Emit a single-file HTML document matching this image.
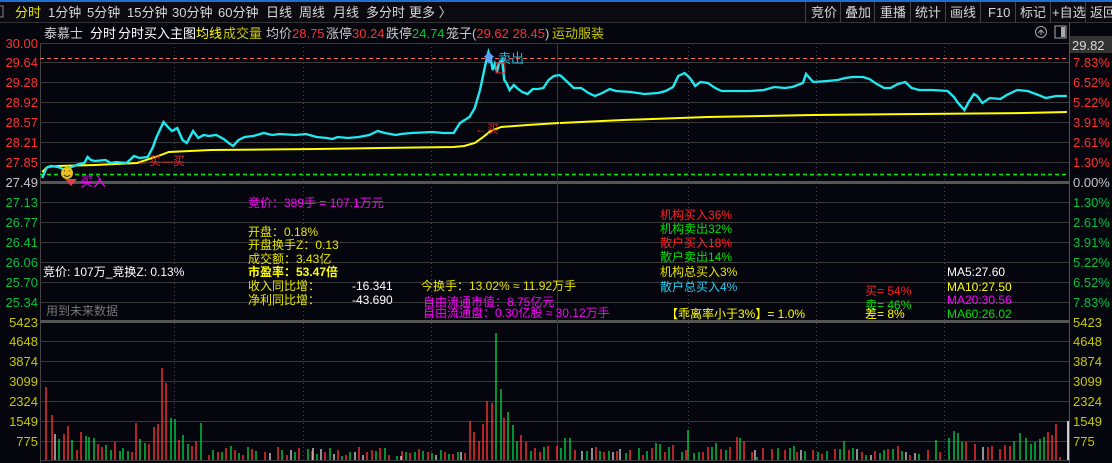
<!DOCTYPE html>
<html><head><meta charset="utf-8">
<style>
html,body{margin:0;padding:0;background:#05050d;width:1112px;height:463px;overflow:hidden}
svg{display:block}
text{font-family:"Liberation Sans","Noto Sans CJK SC",sans-serif;font-size:12px}
</style></head><body>
<svg width="1112" height="463" xmlns="http://www.w3.org/2000/svg">
<rect width="1112" height="463" fill="#05050d"/>
<rect x="0" y="0" width="1112" height="2" fill="#1f6fd1"/>
<rect x="0" y="2" width="1112" height="20" fill="#0a0a10"/>
<line x1="0" y1="22.5" x2="1112" y2="22.5" stroke="#333"/>
<rect x="-3" y="6" width="6" height="11" fill="none" stroke="#888"/>
<g fill="#d8d8d8">
<text x="15" y="17" fill="#e8e800" style="font-size:13px">分时</text>
<text x="48" y="17" style="font-size:13px">1分钟</text>
<text x="87" y="17" style="font-size:13px">5分钟</text>
<text x="127" y="17" style="font-size:13px">15分钟</text>
<text x="172" y="17" style="font-size:13px">30分钟</text>
<text x="218" y="17" style="font-size:13px">60分钟</text>
<text x="266" y="17" style="font-size:13px">日线</text>
<text x="299" y="17" style="font-size:13px">周线</text>
<text x="333" y="17" style="font-size:13px">月线</text>
<text x="366" y="17" style="font-size:13px">多分时</text>
<text x="409" y="17" style="font-size:13px">更多 〉</text>
</g>
<g stroke="#444">
<line x1="805.5" y1="2" x2="805.5" y2="22"/><line x1="840.5" y1="2" x2="840.5" y2="22"/>
<line x1="874.5" y1="2" x2="874.5" y2="22"/><line x1="910.5" y1="2" x2="910.5" y2="22"/>
<line x1="945.5" y1="2" x2="945.5" y2="22"/><line x1="980.5" y1="2" x2="980.5" y2="22"/>
<line x1="1015.5" y1="2" x2="1015.5" y2="22"/><line x1="1050.5" y1="2" x2="1050.5" y2="22"/>
<line x1="1085.5" y1="2" x2="1085.5" y2="22"/>
</g>
<g fill="#d8d8d8">
<text x="811" y="17" style="font-size:13px">竞价</text>
<text x="845" y="17" style="font-size:13px">叠加</text>
<text x="880" y="17" style="font-size:13px">重播</text>
<text x="915" y="17" style="font-size:13px">统计</text>
<text x="950" y="17" style="font-size:13px">画线</text>
<text x="988" y="17" style="font-size:13px">F10</text>
<text x="1020" y="17" style="font-size:13px">标记</text>
<text x="1052" y="17" style="font-size:13px">+自选</text>
<text x="1090" y="17" style="font-size:13px">返回</text>
</g>
<g>
<text x="44" y="38" fill="#d0d0d0" style="font-size:13px">泰慕士</text>
<text x="90" y="38" fill="#fff" style="font-size:13px">分时</text>
<text x="118" y="38" fill="#fff" style="font-size:13px">分时买入主图</text>
<text x="196" y="38" fill="#ffff00" style="font-size:13px">均线</text>
<text x="223" y="38" fill="#c8c800" style="font-size:13px">成交量</text>
<text x="266" y="38" fill="#c8c8c8" style="font-size:13px">均价</text>
<text x="292" y="38" fill="#ff3030" style="font-size:13px">28.75</text>
<text x="326" y="38" fill="#c8c8c8" style="font-size:13px">涨停</text>
<text x="352" y="38" fill="#ff3030" style="font-size:13px">30.24</text>
<text x="386" y="38" fill="#c8c8c8" style="font-size:13px">跌停</text>
<text x="412" y="38" fill="#00d030" style="font-size:13px">24.74</text>
<text x="446" y="38" fill="#c8c8c8" style="font-size:13px">笼子(<tspan fill="#ff3030">29.62 28.45</tspan>)</text>
<text x="552" y="38" fill="#c8c800" style="font-size:13px">运动服装</text>
</g>
<circle cx="1041" cy="32" r="5.5" fill="none" stroke="#aaa"/><path d="M1038 33 L1041 30 L1044 33 M1041 30 V35" stroke="#aaa" fill="none"/>
<rect x="1055" y="26" width="11" height="12" fill="none" stroke="#aaa"/><rect x="1061" y="27" width="4" height="10" fill="#aaa"/>
<line x1="40.5" y1="43" x2="40.5" y2="463" stroke="#444"/>
<line x1="1069.5" y1="22" x2="1069.5" y2="463" stroke="#555"/>
<path stroke="#3a3a3a" d="M40 43.5H1069M40 62.5H1069M40 82.5H1069M40 102.5H1069M40 122.5H1069M40 142.5H1069M40 162.5H1069M40 202.5H1069M40 222.5H1069M40 242.5H1069M40 262.5H1069M40 282.5H1069M40 302.5H1069M40 341.5H1069M40 361.5H1069M40 381.5H1069M40 401.5H1069M40 421.5H1069M40 441.5H1069M40 460.5H1069"/>
<rect x="40" y="181" width="1029" height="3" fill="#555"/>
<rect x="40" y="320" width="1029" height="3" fill="#555"/>
<g stroke="#444" stroke-dasharray="1,3">
<line x1="174.5" y1="43" x2="174.5" y2="460"/><line x1="303.5" y1="43" x2="303.5" y2="460"/>
<line x1="431.5" y1="43" x2="431.5" y2="460"/><line x1="688.5" y1="43" x2="688.5" y2="460"/>
<line x1="816.5" y1="43" x2="816.5" y2="460"/><line x1="944.5" y1="43" x2="944.5" y2="460"/>
</g>
<line x1="557.5" y1="43" x2="557.5" y2="460" stroke="#3a3a3a"/>
<line x1="40" y1="58.5" x2="1069" y2="58.5" stroke="#ff6060" stroke-dasharray="4,3"/>
<line x1="40" y1="174.5" x2="1069" y2="174.5" stroke="#00ee00" stroke-width="1.5" stroke-dasharray="4,3"/>
<g text-anchor="end" style="font-size:13px">
<text x="38" y="48" fill="#ff3030" style="font-size:13px">30.00</text>
<text x="38" y="67" fill="#ff3030" style="font-size:13px">29.64</text>
<text x="38" y="87" fill="#ff3030" style="font-size:13px">29.28</text>
<text x="38" y="107" fill="#ff3030" style="font-size:13px">28.92</text>
<text x="38" y="127" fill="#ff3030" style="font-size:13px">28.57</text>
<text x="38" y="147" fill="#ff3030" style="font-size:13px">28.21</text>
<text x="38" y="167" fill="#ff3030" style="font-size:13px">27.85</text>
<text x="38" y="187" fill="#c8c8c8" style="font-size:13px">27.49</text>
<text x="38" y="207" fill="#00c040" style="font-size:13px">27.13</text>
<text x="38" y="227" fill="#00c040" style="font-size:13px">26.77</text>
<text x="38" y="247" fill="#00c040" style="font-size:13px">26.41</text>
<text x="38" y="267" fill="#00c040" style="font-size:13px">26.06</text>
<text x="38" y="287" fill="#00c040" style="font-size:13px">25.70</text>
<text x="38" y="307" fill="#00c040" style="font-size:13px">25.34</text>
<text x="38" y="327" fill="#c8c800" style="font-size:13px">5423</text>
<text x="38" y="346" fill="#c8c800" style="font-size:13px">4648</text>
<text x="38" y="366" fill="#c8c800" style="font-size:13px">3874</text>
<text x="38" y="386" fill="#c8c800" style="font-size:13px">3099</text>
<text x="38" y="406" fill="#c8c800" style="font-size:13px">2324</text>
<text x="38" y="426" fill="#c8c800" style="font-size:13px">1549</text>
<text x="38" y="446" fill="#c8c800" style="font-size:13px">775</text>
</g>
<rect x="1070" y="36" width="42" height="17" fill="#333"/>
<text x="1072" y="50" fill="#d8d8d8" style="font-size:13px">29.82</text>
<g>
<text x="1073" y="67" fill="#ff3030" style="font-size:13px">7.83%</text>
<text x="1073" y="87" fill="#ff3030" style="font-size:13px">6.52%</text>
<text x="1073" y="107" fill="#ff3030" style="font-size:13px">5.22%</text>
<text x="1073" y="127" fill="#ff3030" style="font-size:13px">3.91%</text>
<text x="1073" y="147" fill="#ff3030" style="font-size:13px">2.61%</text>
<text x="1073" y="167" fill="#ff3030" style="font-size:13px">1.30%</text>
<text x="1073" y="187" fill="#c8c8c8" style="font-size:13px">0.00%</text>
<text x="1073" y="207" fill="#00c040" style="font-size:13px">1.30%</text>
<text x="1073" y="227" fill="#00c040" style="font-size:13px">2.61%</text>
<text x="1073" y="247" fill="#00c040" style="font-size:13px">3.91%</text>
<text x="1073" y="267" fill="#00c040" style="font-size:13px">5.22%</text>
<text x="1073" y="287" fill="#00c040" style="font-size:13px">6.52%</text>
<text x="1073" y="307" fill="#00c040" style="font-size:13px">7.83%</text>
<text x="1073" y="327" fill="#c8c800" style="font-size:13px">5423</text>
<text x="1073" y="346" fill="#c8c800" style="font-size:13px">4648</text>
<text x="1073" y="366" fill="#c8c800" style="font-size:13px">3874</text>
<text x="1073" y="386" fill="#c8c800" style="font-size:13px">3099</text>
<text x="1073" y="406" fill="#c8c800" style="font-size:13px">2324</text>
<text x="1073" y="426" fill="#c8c800" style="font-size:13px">1549</text>
<text x="1073" y="446" fill="#c8c800" style="font-size:13px">775</text>
</g>
<!-- volume bars -->
<path stroke="#ff3333" stroke-width="1.4" fill="none" d="M46 387V460M52 415V460M64 434V460M68 426V460M77 450V460M81 432V460M98 444V460M102 447V460M115 442V460M132 452V460M136 423V460M149 444V460M154 427V460M158 424V460M162 368V460M166 383V460M179 440V460M192 446V460M196 441V460M209 455V460M218 452V460M226 448V460M235 450V460M243 455V460M252 449V460M265 452V460M278 447V460M287 455V460M299 448V460M312 451V460M325 452V460M338 450V460M346 455V460M359 447V460M367 452V460M372 450V460M380 448V460M389 455V460M402 451V460M410 453V460M419 449V460M428 452V460M445 452V460M453 454V460M465 453V460M470 421V460M474 432V460M479 441V460M483 424V460M487 401V460M492 403V460M504 418V460M521 435V460M526 442V460M535 448V460M540 452V460M548 446V460M557 446V460M575 450V460M596 447V460M604 452V460M617 451V460M630 450V460M643 455V460M652 448V460M665 452V460M673 445V460M686 450V460M703 452V460M708 447V460M721 449V460M730 447V460M737 437V460M744 441V460M752 452V460M763 448V460M772 449V460M785 450V460M797 452V460M813 450V460M822 454V460M835 449V460M849 450V460M862 452V460M875 451V460M888 449V460M898 446V460M910 455V460M928 450V460M940 452V460M966 442V460M975 444V460M988 447V460M992 446V460M1000 449V460M1005 445V460M1010 446V460M1048 432V460M1052 435V460M1056 424V460M1060 457V460"/>
<path stroke="#00cc44" stroke-width="1.4" fill="none" d="M59 439V460M72 440V460M86 436V460M89 437V460M94 438V460M106 445V460M111 450V460M120 451V460M123 448V460M128 451V460M140 439V460M145 443V460M171 418V460M175 419V460M183 435V460M188 444V460M201 423V460M213 450V460M222 452V460M231 446V460M239 453V460M248 447V460M256 451V460M282 450V460M295 452V460M308 449V460M317 454V460M330 448V460M342 456V460M350 452V460M376 451V460M385 448V460M397 456V460M406 452V460M415 452V460M423 451V460M432 453V460M441 450V460M449 454V460M458 452V460M496 333V460M501 389V460M508 412V460M513 425V460M517 441V460M531 451V460M544 447V460M561 448V460M565 438V460M570 438V460M587 451V460M600 451V460M609 451V460M626 453V460M639 448V460M647 451V460M656 443V460M660 444V460M669 447V460M682 452V460M688 430V460M694 453V460M699 452V460M712 447V460M716 443V460M726 450V460M740 438V460M757 457V460M778 448V460M790 448V460M794 446V460M805 451V460M818 452V460M827 451V460M840 449V460M844 441V460M853 448V460M866 455V460M880 453V460M884 450V460M893 449V460M902 451V460M919 454V460M936 440V460M949 438V460M954 431V460M958 433V460M962 442V460M1014 441V460M1020 433V460M1026 438V460M1031 444V460M1035 442V460M1040 439V460M1044 437V460"/>
<path stroke="#cccccc" stroke-width="1.4" fill="none" d="M55 434V460M270 453V460M291 450V460M313 448V460M321 449V460M334 454V460M355 452V460M363 455V460M401 456V460M436 455V460M461 452V460M582 451V460M592 448V460M613 452V460M620 449V460M755 450V460M801 450V460M857 449V460M871 455V460M906 452V460M915 453V460M983 447V460"/>
<rect x="1067" y="421" width="2" height="39" fill="#cccccc"/>
<!-- lines -->
<g transform="scale(1.055,1)">
<polyline fill="none" stroke="#ffff00" stroke-width="2" points="40,172 45,167 55,166 90,165 130,163 150,156 160,152 200,150 300,149 430,147 440,146 450,143 458,137 465,131 475,127 500,125 530,123"/>
<polyline fill="none" stroke="#1ee8f0" stroke-width="2.3" points="40,178 44,168 48,166 55,167 62,170 70,166 75,164 80,163 83,157 86,160 90,161 100,160 105,163 110,162 120,163 127,156 132,158 140,157 145,147 148,138 155,122 160,128 163,131 168,128 173,140 177,143 183,131 188,138 193,135 198,136 205,135 212,139 218,144 221,146 226,140 232,137 240,136 250,133 258,135 265,134 280,135 290,134 300,137 310,138 315,139 320,137 330,138 340,137 350,135 358,131 365,133 375,135 380,134 390,133 410,132 420,133 430,133 436,123 445,117 450,108 455,90 460,65 463,52 465,58 467,70 469,64 471,72 473,63 476,60 478,80 480,83 483,90 487,85 490,88 495,92 500,94 505,89 510,89 515,88 520,80 525,76 531,75"/>
</g>
<g transform="translate(560,0) scale(1.056,1) translate(-560,0)">
<polyline fill="none" stroke="#ffff00" stroke-width="2" points="560,123 620,120 700,117 800,115 900,114 1000,113 1040,112"/>
<polyline fill="none" stroke="#1ee8f0" stroke-width="2.3" points="560,75 573,88 580,88 587,93 593,96 600,93 607,89 613,91 627,92 640,94 653,93 660,91 667,87 672,76 678,73 683,78 688,86 693,82 700,83 707,88 713,91 727,91 740,91 753,90 763,87 773,88 780,87 790,83 793,74 798,80 800,82 813,81 823,80 830,78 837,77 847,77 853,79 860,84 867,88 873,88 880,84 887,82 893,88 900,90 913,90 927,91 933,97 937,103 943,110 947,102 952,94 955,96 960,103 967,98 977,99 983,95 993,90 1003,91 1013,95 1020,98 1030,96 1040,96"/>
</g>
<circle cx="67" cy="173" r="6" fill="#e8c020"/>
<path d="M64 171h1M69 171h1M64 175q3 3 6 0" stroke="#333" fill="none"/>
<path d="M65 179h12l-6 7z" fill="#e04050"/>
<text x="80" y="186" fill="#ff00ff" style="font-size:13px">买入</text>
<text x="137" y="165" fill="#ff2020">←买—买</text>
<text x="475" y="133" fill="#ff2020">←买</text>
<path d="M484 56h10l-5 8z M485 56l4-4 4 4z" fill="#60a0ff"/>
<text x="498" y="63" fill="#20c0e0" style="font-size:13px">卖出</text>
<rect x="496" y="63" width="9" height="10" fill="none" stroke="#ff2020"/>
<g>
<text x="248" y="207" fill="#ff00ff">竞价：389手 = 107.1万元</text>
<text x="248" y="236" fill="#e8e800">开盘：0.18%</text>
<text x="248" y="249" fill="#e8e800">开盘换手Z：0.13</text>
<text x="248" y="263" fill="#e8e800">成交额：3.43亿</text>
<text x="248" y="276" fill="#ffff00" font-weight="bold">市盈率：53.47倍</text>
<text x="248" y="290" fill="#e8e800">收入同比增：</text>
<text x="248" y="304" fill="#e8e800">净利同比增：</text>
<text x="352" y="290" fill="#fff">-16.341</text>
<text x="352" y="304" fill="#fff">-43.690</text>
<text x="421" y="290" fill="#e8e800">今换手：13.02% ≈ 11.92万手</text>
<text x="423" y="306" fill="#ff00ff">自由流通市值：8.75亿元</text>
<text x="423" y="317" fill="#ff00ff">自由流通盘：0.30亿股 ≈ 30.12万手</text>
<text x="43" y="276" fill="#fff">竞价: 107万_竞换Z: 0.13%</text>
<text x="46" y="315" fill="#777">用到未来数据</text>
<text x="660" y="219" fill="#ff2020">机构买入36%</text>
<text x="660" y="233" fill="#00e000">机构卖出32%</text>
<text x="660" y="247" fill="#ff2020">散户买入18%</text>
<text x="660" y="261" fill="#00e000">散户卖出14%</text>
<text x="660" y="276" fill="#e8e800">机构总买入3%</text>
<text x="660" y="291" fill="#20d0f0">散户总买入4%</text>
<text x="666" y="318" fill="#ffff00">【乖离率小于3%】= 1.0%</text>
<text x="865" y="295" fill="#ff2020">买= 54%</text>
<text x="865" y="309" fill="#00e000">卖= 46%</text>
<text x="865" y="318" fill="#ffff00">差= 8%</text>
<text x="947" y="276" fill="#fff">MA5:27.60</text>
<text x="947" y="291" fill="#ffff00">MA10:27.50</text>
<text x="947" y="304" fill="#ff00ff">MA20:30.56</text>
<text x="947" y="318" fill="#00e000">MA60:26.02</text>
</g>
</svg>
</body></html>
